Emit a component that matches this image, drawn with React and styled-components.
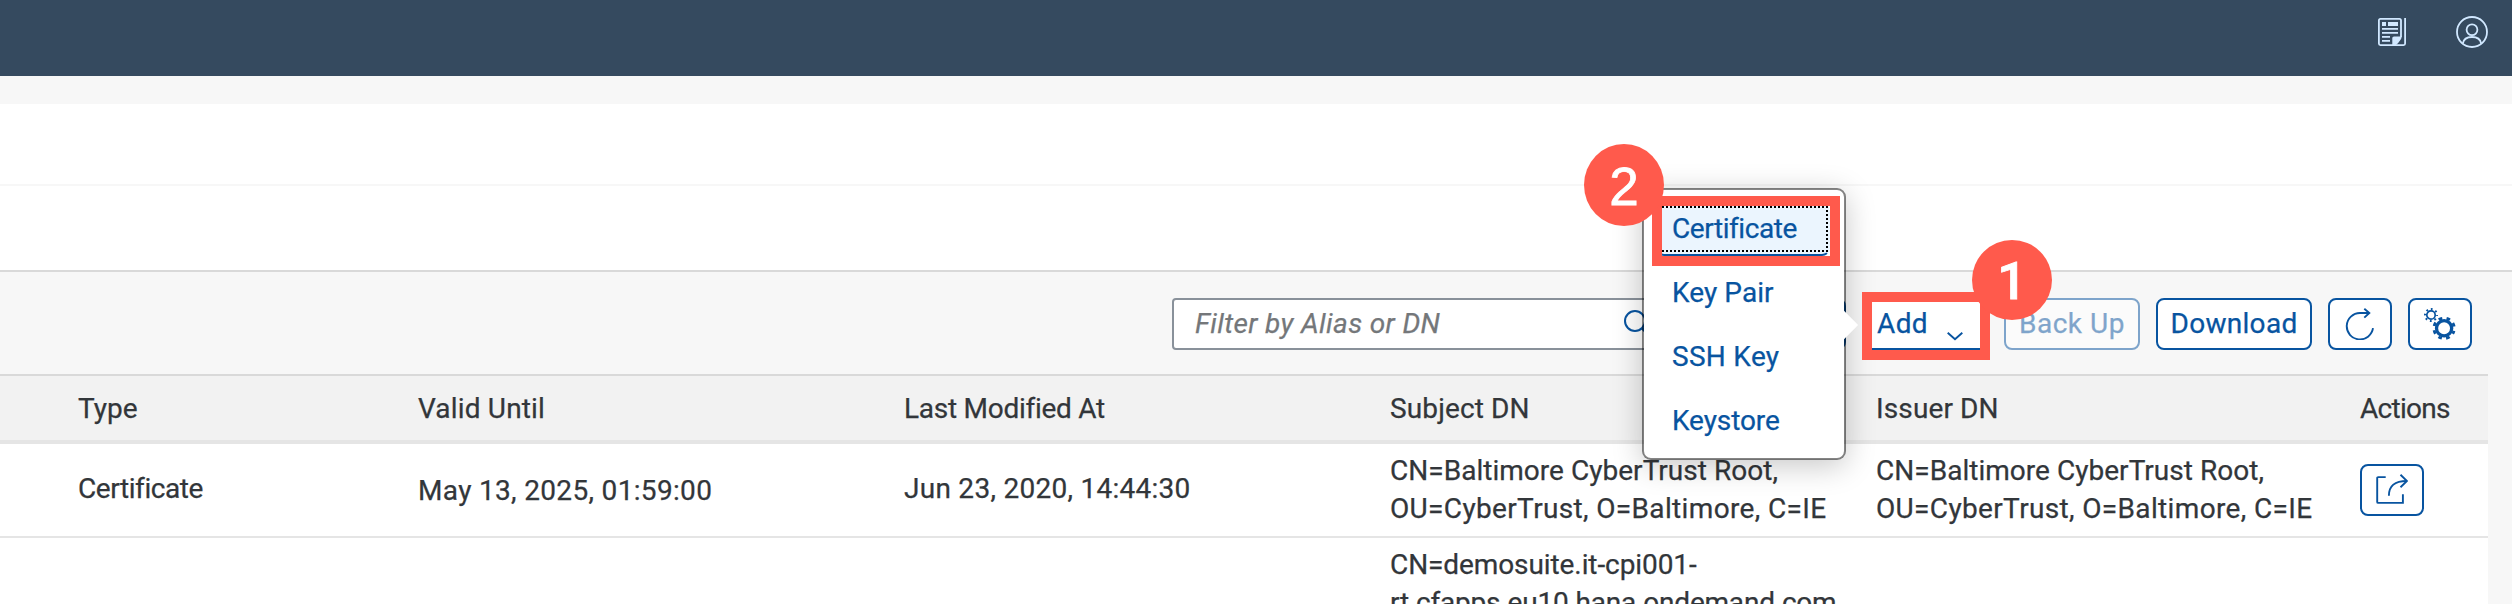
import React from "react";
import styled, { createGlobalStyle } from "styled-components";

const color = {
  shell: "#354a5f",
  shellIcon: "#d1e8ff",
  page: "#f7f7f7",
  text: "#32363a",
  link: "#0854a0",
  line: "#d9d9d9",
  rowLine: "#e5e5e5",
  mark: "#ff5a4c",
};

const GlobalStyle = createGlobalStyle`
  *, *::before, *::after { box-sizing: border-box; }
  body {
    margin: 0;
    background: ${color.page};
    color: ${color.text};
    font-family: Roboto, "Liberation Sans", sans-serif;
    font-size: 28px;
    line-height: 38px;
    -webkit-text-stroke: 0.25px currentColor;
  }
`;

const Page = styled.div`
  position: relative;
  width: 2512px;
  height: 604px;
  overflow: hidden;
  display: flex;
  flex-direction: column;
`;

const ShellBar = styled.header`
  flex: none;
  height: 76px;
  padding: 16px 24px 0 0;
  display: flex;
  justify-content: flex-end;
  gap: 50px;
  background: ${color.shell};
  color: ${color.shellIcon};
`;

const ShellIcon = styled.svg`
  display: block;
  flex: none;
  margin-top: ${(p) => p.$drop || 0}px;
`;

const Title = styled.section`
  flex: none;
  height: 82px;
  margin-top: 28px;
  background: #fff;
  border-bottom: 2px solid #f7f7f7;
`;

const TabStrip = styled.section`
  flex: none;
  height: 86px;
  background: #fff;
  border-bottom: 2px solid ${color.line};
`;

const Toolbar = styled.div`
  flex: none;
  height: 102px;
  padding: 26px 40px 0 0;
  display: flex;
  justify-content: flex-end;
  align-items: flex-start;
  gap: 16px;
`;

const Search = styled.div`
  width: 496px;
  height: 52px;
  padding: 0 15px 0 21px;
  display: flex;
  align-items: center;
  justify-content: space-between;
  background: #fff;
  border: 2px solid #89919a;
  border-radius: 4px;
  color: ${color.link};
`;

const Placeholder = styled.span`
  color: #74777a;
  font-style: italic;
  letter-spacing: 0.36px;
`;

const Button = styled.button`
  width: ${(p) => p.$width}px;
  height: 52px;
  margin: 0;
  padding: ${(p) => p.$padding || "0"};
  display: flex;
  align-items: center;
  justify-content: ${(p) => p.$justify || "center"};
  background: #fff;
  border: 2px solid ${color.link};
  border-radius: 8px;
  color: ${color.link};
  font: inherit;
  letter-spacing: ${(p) => p.$tracking || 0}px;
  opacity: ${(p) => (p.$dimmed ? 0.5 : 1)};
`;

const CreateButton = styled(Button)`
  margin-right: 2px;
`;

const Chevron = styled.svg`
  display: block;
  margin-top: 24px;
`;

const Table = styled.div`
  flex: none;
  width: 2488px;
`;

const Row = styled.div`
  display: grid;
  grid-template-columns: 340px 486px 486px 486px 484px 144px;
  align-items: start;
  height: ${(p) => p.$height}px;
  padding: 8px 0 0 62px;
  background: #fff;
  border-bottom: 2px solid ${color.rowLine};
`;

const HeadRow = styled(Row)`
  align-items: center;
  padding-top: 2px;
  background: #f2f2f2;
  border-top: 2px solid ${color.line};
  border-bottom-width: 4px;
`;

const Cell = styled.div`
  padding-left: 16px;
  padding-top: ${(p) => p.$drop || 0}px;
  white-space: nowrap;
  letter-spacing: ${(p) => p.$tracking || 0}px;
`;

const TextLine = styled.div`
  letter-spacing: ${(p) => p.$tracking}px;
`;

const Popover = styled.div`
  position: absolute;
  left: 1642px;
  top: 188px;
  width: 204px;
  height: 272px;
  padding: 14px 6px;
  background: #fff;
  background-clip: padding-box;
  border: 2px solid rgba(0, 0, 0, 0.48);
  border-radius: 9px;
  box-shadow: 0 6px 30px rgba(0, 0, 0, 0.22);

  &::after {
    content: "";
    position: absolute;
    left: 190px;
    top: 125px;
    width: 20px;
    height: 20px;
    background: #fff;
    transform: rotate(45deg);
  }
`;

const MenuItem = styled.div`
  position: relative;
  height: 52px;
  margin-bottom: 12px;
  padding: 0 0 2px 20px;
  display: flex;
  align-items: center;
  border-radius: 8px;
  border: 2px solid transparent;
  color: ${color.link};
  letter-spacing: ${(p) => p.$tracking}px;
`;

const FocusedItem = styled(MenuItem)`
  width: 174px;
  margin-left: 6px;
  padding-left: 14px;
  background: #ebf5fe;
  border-color: ${color.link};
  border-top-color: #ebf5fe;
  border-right-color: #ebf5fe;

  &::after {
    content: "";
    position: absolute;
    inset: 0 0 2px 0;
    border: 2px dotted #000;
  }
`;

const Highlight = styled.div`
  position: absolute;
  left: ${(p) => p.$x}px;
  top: ${(p) => p.$y}px;
  width: ${(p) => p.$w}px;
  height: ${(p) => p.$h}px;
  border: 10px solid ${color.mark};
`;

const StepBadge = styled.div`
  position: absolute;
  left: ${(p) => p.$x}px;
  top: ${(p) => p.$y}px;
  width: 80px;
  height: ${(p) => p.$h || 80}px;
  padding-top: 3px;
  display: flex;
  align-items: center;
  justify-content: center;
  border-radius: 50%;
  background: ${color.mark};
  color: #fff;
  font: ${(p) => p.$font};
  -webkit-text-stroke: 0.8px #fff;
`;

const NewsIcon = () => (
  <ShellIcon $drop={2} width="28" height="28" viewBox="0 0 28 28" fill="none" stroke="currentColor" strokeWidth="1.8">
    <path d="M23 19V2.4Q23 .9 21.5 .9H2.4Q.9 .9 .9 2.4V25.6Q.9 27.1 2.4 27.1H25.6Q27.1 27.1 27.1 25.6V0" />
    <path d="M4 10.9H20M4 14.9H20M4 18.9H12M4 22.9H12" />
    <path d="M4 4H8V8H4ZM10 4H20V8H10ZM14.3 27V20Q14.3 18.4 16 18.4H23.8Q23.4 22 18 27Z" fill="currentColor" stroke="none" />
  </ShellIcon>
);

const UserIcon = () => (
  <ShellIcon width="32" height="32" viewBox="0 0 32 32" fill="none" stroke="currentColor" strokeWidth="1.8">
    <circle cx="16" cy="16" r="15" />
    <circle cx="16" cy="13.8" r="5.4" />
    <path d="M6.8 27.6C7.6 22.8 11.4 21 16 21S24.4 22.8 25.2 27.6" />
  </ShellIcon>
);

const SearchIcon = () => (
  <svg width="28" height="28" viewBox="0 0 28 28" fill="none" stroke="currentColor">
    <circle cx="12" cy="11" r="10" strokeWidth="2" />
    <path d="M19 18L26 25" strokeWidth="3" />
  </svg>
);

const RefreshIcon = () => (
  <svg width="32" height="32" viewBox="0 0 32 32" fill="none" stroke="currentColor" strokeWidth="1.9">
    <path d="M29 20.2A13.2 13.2 0 1 1 16 5H25" />
    <path d="M20.3 .8L25.3 5L20.3 9.6" />
  </svg>
);

const GearsIcon = () => (
  <svg width="32" height="32" viewBox="0 0 32 32" fill="none" stroke="currentColor">
    <circle cx="7" cy="7" r="4.2" strokeWidth="1.7" />
    <circle cx="7" cy="7" r="6" strokeWidth="2" strokeDasharray="1.8 2.912" strokeDashoffset="0.9" />
    <circle cx="20.1" cy="20.3" r="7.6" strokeWidth="3.3" />
    <circle cx="20.1" cy="20.3" r="10.2" strokeWidth="2.8" strokeDasharray="3.8 4.211" strokeDashoffset="1.9" transform="rotate(22.5 20.1 20.3)" />
  </svg>
);

const ShareIcon = () => (
  <svg width="32" height="32" viewBox="0 0 32 32" fill="none" stroke="currentColor" strokeWidth="1.9">
    <path d="M9.7 3.1H2.2Q1.2 3.1 1.2 4.1V27.9Q1.2 28.9 2.2 28.9H26.9V20.3" />
    <path d="M12.9 21.8C12.9 12 18 7 31 7" />
    <path d="M24.5 .8L31 7L24.5 13.2" />
  </svg>
);

export default function App() {
  return (
    <>
      <GlobalStyle />
      <Page>
        <ShellBar>
          <NewsIcon />
          <UserIcon />
        </ShellBar>
        <Title />
        <TabStrip />
        <Toolbar>
          <Search>
            <Placeholder>Filter by Alias or DN</Placeholder>
            <SearchIcon />
          </Search>
          <CreateButton $width={162} aria-label="Create" />
          <Button $width={124} $padding="0 23px 0 11px" $justify="space-between" $tracking={0.4}>
            Add
            <Chevron width="16" height="9" viewBox="0 0 16 9" fill="none" stroke="currentColor" strokeWidth="1.9">
              <path d="M.7 .8L8 7.3L15.3 .8" />
            </Chevron>
          </Button>
          <Button $width={136} $tracking={0.55} $dimmed>Back Up</Button>
          <Button $width={156} $tracking={0.3}>Download</Button>
          <Button $width={64} aria-label="Refresh"><RefreshIcon /></Button>
          <Button $width={64} aria-label="Settings"><GearsIcon /></Button>
        </Toolbar>
        <Table>
          <HeadRow $height={70}>
            <Cell>Type</Cell>
            <Cell $tracking={0.17}>Valid Until</Cell>
            <Cell $tracking={-0.27}>Last Modified At</Cell>
            <Cell $tracking={0.12}>Subject DN</Cell>
            <Cell $tracking={0.12}>Issuer DN</Cell>
            <Cell $tracking={-0.7}>Actions</Cell>
          </HeadRow>
          <Row $height={94}>
            <Cell $drop={18} $tracking={-0.42}>Certificate</Cell>
            <Cell $drop={20} $tracking={0.33}>May 13, 2025, 01:59:00</Cell>
            <Cell $drop={18} $tracking={0.27}>Jun 23, 2020, 14:44:30</Cell>
            <Cell>
              <TextLine $tracking={0.03}>CN=Baltimore CyberTrust Root,</TextLine>
              <TextLine $tracking={0.35}>OU=CyberTrust, O=Baltimore, C=IE</TextLine>
            </Cell>
            <Cell>
              <TextLine $tracking={0.03}>CN=Baltimore CyberTrust Root,</TextLine>
              <TextLine $tracking={0.35}>OU=CyberTrust, O=Baltimore, C=IE</TextLine>
            </Cell>
            <Cell $drop={12}>
              <Button $width={64} aria-label="Share"><ShareIcon /></Button>
            </Cell>
          </Row>
          <Row $height={132}>
            <Cell />
            <Cell />
            <Cell />
            <Cell>
              <TextLine $tracking={-0.09}>CN=demosuite.it-cpi001-</TextLine>
              <TextLine $tracking={-0.21}>rt.cfapps.eu10.hana.ondemand.com</TextLine>
            </Cell>
          </Row>
        </Table>

        <Popover>
          <FocusedItem $tracking={-0.43}>Certificate</FocusedItem>
          <MenuItem $tracking={0.06}>Key Pair</MenuItem>
          <MenuItem $tracking={0.3}>SSH Key</MenuItem>
          <MenuItem $tracking={-0.1}>Keystore</MenuItem>
        </Popover>

        <Highlight $x={1652} $y={196} $w={188} $h={70} />
        <Highlight $x={1862} $y={292} $w={128} $h={68} />
        <StepBadge $x={1584} $y={144} $h={82} $font='53px/60px "Liberation Sans", Arial, sans-serif'>2</StepBadge>
        <StepBadge $x={1972} $y={240} $font="500 52px/60px Roboto, sans-serif">1</StepBadge>
      </Page>
    </>
  );
}
